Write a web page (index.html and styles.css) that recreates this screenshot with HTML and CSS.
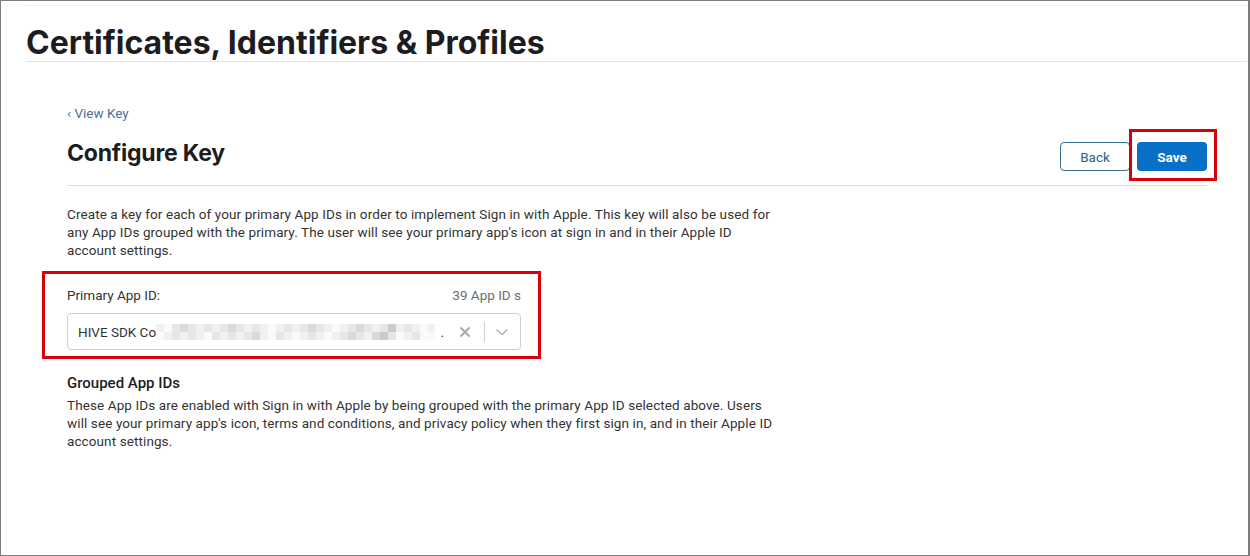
FILE: index.html
```html
<!DOCTYPE html>
<html lang="en">
<head>
    <meta charset="UTF-8">
    <title>Certificates, Identifiers &amp; Profiles</title>
    <link rel="stylesheet" href="styles.css">
</head>
<body>
    <div class="frame">
        <header class="top">
            <h1>Certificates, Identifiers &amp; Profiles</h1>
        </header>

        <main class="content">
            <a class="back-link" href="#">&lsaquo; View Key</a>

            <div class="title-row">
                <h2>Configure Key</h2>
                <div class="actions">
                    <button type="button" class="btn btn-outline">Back</button>
                    <span class="marked-save">
                        <button type="button" class="btn btn-primary">Save</button>
                    </span>
                </div>
            </div>

            <p class="desc">Create a key for each of your primary App IDs in order to implement Sign in with Apple. This key will also be used for any App IDs grouped with the primary. The user will see your primary app's icon at sign in and in their Apple ID account settings.</p>

            <div class="marked marked-field">
                <div class="field-head">
                    <label>Primary App ID:</label>
                    <span class="count">39 App ID s</span>
                </div>
                <div class="select">
                    <span class="value">HIVE SDK Co</span>
                    <span class="mosaic">
                        <span class="row">
                            <i class="m1"></i><i class="m0"></i><i class="m2"></i><i class="m3"></i><i class="m2"></i><i class="m1"></i><i class="m2"></i><i class="m1"></i><i class="m2"></i><i class="m3"></i><i class="m2"></i><i class="m1"></i><i class="m2"></i><i class="m1"></i><i class="m0"></i><i class="m1"></i><i class="m2"></i><i class="m1"></i><i class="m2"></i><i class="m3"></i><i class="m2"></i><i class="m1"></i><i class="m0"></i><i class="m1"></i><i class="m2"></i><i class="m3"></i><i class="m2"></i><i class="m1"></i><i class="m2"></i><i class="m4"></i><i class="m1"></i><i class="m2"></i><i class="m1"></i><i class="m0"></i><i class="m1"></i>
                        </span>
                        <span class="row">
                            <i class="m0"></i><i class="m1"></i><i class="m2"></i><i class="m1"></i><i class="m2"></i><i class="m1"></i><i class="m0"></i><i class="m2"></i><i class="m1"></i><i class="m2"></i><i class="m1"></i><i class="m2"></i><i class="m3"></i><i class="m1"></i><i class="m0"></i><i class="m2"></i><i class="m1"></i><i class="m0"></i><i class="m1"></i><i class="m2"></i><i class="m1"></i><i class="m0"></i><i class="m1"></i><i class="m2"></i><i class="m3"></i><i class="m2"></i><i class="m1"></i><i class="m3"></i><i class="m4"></i><i class="m2"></i><i class="m0"></i><i class="m1"></i><i class="m2"></i><i class="m0"></i><i class="m0"></i>
                        </span>
                    </span>
                    <span class="dot">.</span>
                    <span class="clear">
                        <svg width="12" height="12" viewBox="0 0 12 12"><path d="M1.5 1.5 L10.5 10.5 M10.5 1.5 L1.5 10.5" stroke="#a8a8a8" stroke-width="2" fill="none"/></svg>
                    </span>
                    <span class="sep"></span>
                    <span class="chevron">
                        <svg width="14" height="8" viewBox="0 0 14 8"><path d="M1.5 1.5 L7 6.5 L12.5 1.5" stroke="#b3b3b3" stroke-width="1.6" fill="none"/></svg>
                    </span>
                </div>
            </div>

            <h3>Grouped App IDs</h3>
            <p class="desc">These App IDs are enabled with Sign in with Apple by being grouped with the primary App ID selected above. Users will see your primary app's icon, terms and conditions, and privacy policy when they first sign in, and in their Apple ID account settings.</p>
        </main>
    </div>
</body>
</html>
```

FILE: styles.css
```css
* {
    box-sizing: border-box;
}

body {
    margin: 0;
    font-family: Roboto, "Liberation Sans", Arial, sans-serif;
    color: #1d1d1f;
    background-color: #fff;
}

.frame {
    width: 1250px;
    height: 556px;
    border: 1px solid #7d7d7d;
    border-right-width: 2px;
    overflow: hidden;
}

.top {
    margin: 4px 1px 0 25px;
    border-top: 1px solid #f6f6f6;
    border-bottom: 1px solid #e3e3e3;
    height: 57px;
    display: flex;
    align-items: flex-end;
}

h1 {
    margin: 0;
    font-family: Inter, "Liberation Sans", Arial, sans-serif;
    font-size: 32px;
    font-weight: 700;
    letter-spacing: 0;
    line-height: 36px;
}

.content {
    width: 1140px;
    margin-left: 66px;
    padding-top: 43px;
}

.back-link {
    display: block;
    font-size: 13.5px;
    color: #4b6f97;
    text-decoration: none;
    line-height: 16px;
}

.title-row {
    display: flex;
    justify-content: space-between;
    align-items: flex-start;
    margin-top: 21px;
    padding-bottom: 14px;
    border-bottom: 1px solid #dcdcdc;
}

h2 {
    margin: -4px 0 0;
    font-family: Inter, "Liberation Sans", Arial, sans-serif;
    font-size: 23px;
    font-weight: 700;
    line-height: 30px;
    letter-spacing: -0.2px;
}

.actions {
    display: flex;
    align-items: center;
    gap: 7px;
}

.btn {
    display: block;
    width: 70px;
    height: 29px;
    font-family: inherit;
    font-size: 13.5px;
    border-radius: 4px;
    cursor: pointer;
}

.btn-outline {
    background-color: #fff;
    border: 1px solid #3c6d93;
    color: #2e5f86;
}

.btn-primary {
    background-color: #0a6fc6;
    border: none;
    color: #fff;
    font-weight: 700;
}

.marked {
    border: 3px solid #d8000c;
}

/* annotation frame drawn over the Save button */
.marked-save {
    position: relative;
    display: block;
}

.marked-save::after {
    content: "";
    position: absolute;
    top: -13px;
    bottom: -10px;
    left: -8px;
    right: -10px;
    border: 3px solid #d8000c;
    pointer-events: none;
}

.desc {
    margin: 19px 0 0;
    width: 715px;
    font-size: 13.5px;
    letter-spacing: 0.1px;
    line-height: 18px;
    color: #333;
}

.marked-field {
    width: 499px;
    margin: 12px 0 0 -25px;
    padding: 12px 17px 6px 22px;
}

.field-head {
    display: flex;
    justify-content: space-between;
    align-items: baseline;
    font-size: 13.5px;
    line-height: 18px;
}

.field-head label {
    color: #333;
}

.count {
    color: #6e6e6e;
}

.select {
    margin-top: 9px;
    height: 37px;
    border: 1px solid #cfcfcf;
    border-radius: 4px;
    display: flex;
    align-items: center;
    padding-left: 10px;
    font-size: 13.5px;
    color: #333;
}

.value {
    flex-shrink: 0;
    white-space: nowrap;
}

.mosaic {
    display: flex;
    flex-direction: column;
    flex: 1;
    min-width: 0;
    overflow: hidden;
}

.mosaic .row {
    display: flex;
}

.mosaic i {
    flex-shrink: 0;
    width: 8px;
    height: 8px;
}

.m0 { background-color: #fafafa; }
.m1 { background-color: #f0f0f0; }
.m2 { background-color: #e6e6e6; }
.m3 { background-color: #d9d9d9; }
.m4 { background-color: #cbcbcb; }

.dot {
    margin-left: 5px;
    margin-right: 15px;
}

.clear {
    display: flex;
}

.sep {
    width: 1px;
    height: 20px;
    background-color: #cfcfcf;
    margin-left: 13px;
}

.chevron {
    display: flex;
    padding: 0 11px 0 10px;
}

h3 {
    margin: 15px 0 0;
    font-size: 15px;
    font-weight: 500;
    line-height: 18px;
}

h3 + .desc {
    margin-top: 4px;
}
```
